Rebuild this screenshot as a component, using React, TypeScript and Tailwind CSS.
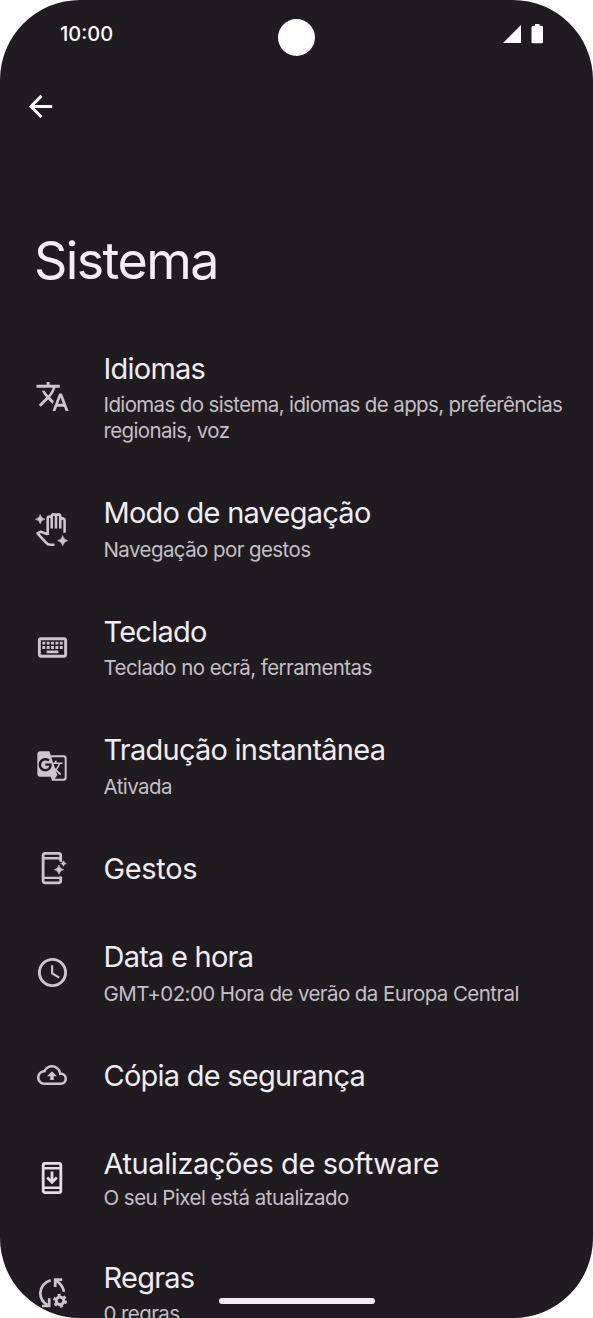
import type { ReactNode } from "react";
import {
  MdArrowBack,
  MdGTranslate,
  MdOutlineBackup,
  MdOutlineKeyboard,
  MdSchedule,
  MdTranslate,
} from "react-icons/md";

function HandIcon() {
  return (
    <svg viewBox="0 0 36 36" className="size-9" fill="none" stroke="currentColor" strokeWidth="2.6">
      <path d="M13.700 24V7.500a2 2 0 0 1 4 0V17.500M17.700 7V5.500a2.150 2.150 0 0 1 4.300 0V17.500M22 5.500a2.150 2.150 0 0 1 4.300 0V17.500M26.300 9.500a2.150 2.150 0 0 1 4.300 0V21.700" />
      <path d="M13.700 23.300L6.800 20.700L3.500 22.400L12 31.600Q13.800 33.700 16.500 33.700H20.500" strokeLinejoin="round" />
      <path d="M6.200 3.500Q6.900 7.400 10.900 8.200Q6.900 9 6.200 12.900Q5.500 9 1.500 8.200Q5.500 7.400 6.200 3.500Z" fill="currentColor" strokeWidth=".6" />
      <path d="M28.700 24.600Q29.500 28.900 33.800 29.700Q29.500 30.500 28.700 34.800Q27.900 30.500 23.600 29.700Q27.900 28.900 28.700 24.600Z" fill="currentColor" strokeWidth=".6" />
    </svg>
  );
}

function GestureIcon() {
  return (
    <svg viewBox="0 0 36 36" className="size-9" fill="none" stroke="currentColor" strokeWidth="2.800">
      <path d="M26.700 11.700V5.200a1.800 1.800 0 0 0-1.800-1.800H10.900a1.800 1.800 0 0 0-1.800 1.800v25.800a1.800 1.800 0 0 0 1.800 1.800h14a1.800 1.800 0 0 0 1.800-1.800V26.500" />
      <path d="M9 8.300H26.700M9 27.900H26.700" strokeWidth="2.400" />
      <path d="M25 15Q25.800 18.900 29.700 19.700Q25.800 20.500 25 24.400Q24.200 20.500 20.300 19.700Q24.200 18.900 25 15Z" fill="currentColor" strokeWidth=".6" />
      <path d="M29.500 10.600Q30 13 32.400 13.500Q30 14 29.500 16.400Q29 14 26.600 13.500Q29 13 29.500 10.600Z" fill="currentColor" strokeWidth=".4" />
    </svg>
  );
}

function UpdateIcon() {
  return (
    <svg viewBox="0 0 36 36" className="size-9 text-[#e3dde5]" fill="none" stroke="currentColor" strokeWidth="2.800">
      <rect x="9.200" y="3.400" width="17.600" height="29.200" rx="1.800" />
      <path d="M9 8.300H27M9 27.700H27" strokeWidth="2.400" />
      <path d="M18 11.500V22M13.200 17.600L18 22.300L22.800 17.600" />
    </svg>
  );
}

function RulesIcon() {
  return (
    <svg viewBox="0 0 36 36" className="size-9" fill="none" stroke="currentColor" strokeWidth="2.700">
      <path d="M16.700 5.300C10.500 7 6.300 12 6.300 18C6.300 23 9 27.500 13.500 30" />
      <path d="M8 31H15.200V23.300M28.200 4.700H21.200V12M21.800 5.300Q28.500 9.500 30 16.700" />
      <circle cx="26" cy="25.700" r="3.800" strokeWidth="3" />
      <circle cx="26" cy="25.700" r="5.700" strokeWidth="2.600" strokeDasharray="2.984 2.984" />
    </svg>
  );
}

type Item = {
  icon: ReactNode;
  title: string;
  lines?: string[];
  rowClass?: string;
  titleClass?: string;
  bodyClass?: string;
};

const items: Item[] = [
  {
    icon: <MdTranslate className="size-[35px]" />,
    title: "Idiomas",
    lines: ["Idiomas do sistema, idiomas de apps, preferências", "regionais, voz"],
    rowClass: "py-[25.25px]",
    bodyClass: "mt-[5px] tracking-[-0.63px]",
  },
  {
    icon: <HandIcon />,
    title: "Modo de navegação",
    lines: ["Navegação por gestos"],
  },
  {
    icon: <MdOutlineKeyboard className="size-[35px]" />,
    title: "Teclado",
    lines: ["Teclado no ecrã, ferramentas"],
  },
  {
    icon: <MdGTranslate className="size-[32px]" />,
    title: "Tradução instantânea",
    lines: ["Ativada"],
  },
  {
    icon: <GestureIcon />,
    title: "Gestos",
    rowClass: "pt-[25.25px] pb-[26.25px]",
    titleClass: "tracking-[-0.35px]",
  },
  {
    icon: <MdSchedule className="size-[35px]" />,
    title: "Data e hora",
    lines: ["GMT+02:00 Hora de verão da Europa Central"],
  },
  {
    icon: <MdOutlineBackup className="size-[30px]" />,
    title: "Cópia de segurança",
    rowClass: "pt-[25.25px] pb-[26px]",
  },
  {
    icon: <UpdateIcon />,
    title: "Atualizações de software",
    lines: ["O seu Pixel está atualizado"],
    rowClass: "pt-[25.25px] pb-[22.5px]",
    titleClass: "tracking-[-0.42px]",
    bodyClass: "mt-[3px] tracking-[-0.54px]",
  },
  {
    icon: <RulesIcon />,
    title: "Regras",
    lines: ["0 regras"],
  },
];

function Row({
  icon,
  title,
  lines,
  rowClass = "pt-[25.25px] pb-[24.75px]",
  titleClass = "tracking-[-0.76px]",
  bodyClass = "mt-[5.5px] tracking-[-0.58px]",
}: Item) {
  return (
    <li className={`flex shrink-0 items-center ${rowClass}`}>
      <div className="-mr-[0.5px] flex w-[104px] shrink-0 justify-center text-[#cbc5cd]">{icon}</div>
      <div className="min-w-0 whitespace-nowrap">
        <h2 className={`text-[29px] leading-[37px] font-normal text-[#f1ebf2] ${titleClass}`}>{title}</h2>
        {lines && (
          <div className={bodyClass}>
            {lines.map((line) => (
              <p key={line} className="text-[20.5px] leading-[26px] font-normal text-[#c5bfc7]">
                {line}
              </p>
            ))}
          </div>
        )}
      </div>
    </li>
  );
}

export default function App() {
  return (
    <div className="h-[1318px] w-[593px] bg-white font-['Inter',sans-serif]">
      <main className="relative flex h-full flex-col overflow-hidden rounded-[80px] bg-[#1f1b20]">
        {/* Status bar */}
        <header className="flex h-[68px] shrink-0 items-center justify-between pr-[49px] pl-[60px] text-white">
          <span className="text-[20px] font-medium">10:00</span>
          <div className="flex items-center gap-[10px]">
            <svg viewBox="0 0 18 18" className="size-[18px]" fill="currentColor">
              <path d="M18 0V18H0Z" />
            </svg>
            <svg viewBox="0 0 13 20" className="h-5 w-[13px]" fill="currentColor">
              <path d="M4 0H8.500V1.800H10.500Q12 1.800 12 3.300V18Q12 19.300 10.700 19.300H1.800Q.5 19.300 .5 18V3.300Q.5 1.800 2 1.800H4Z" />
            </svg>
          </div>
        </header>
        <div className="absolute top-[19px] left-[277.5px] size-[37px] rounded-full bg-white" />

        {/* Toolbar */}
        <div className="flex h-[77px] shrink-0 items-center pl-[23px]">
          <button aria-label="Voltar">
            <MdArrowBack className="size-[35px] text-white" />
          </button>
        </div>

        <h1 className="mt-[86px] ml-[34px] shrink-0 text-[52px] leading-[60px] font-normal tracking-[-1.6px] text-[#f3edf5]">
          Sistema
        </h1>

        <ul className="mt-[33.5px] flex flex-col">
          {items.map((item) => (
            <Row key={item.title} {...item} />
          ))}
        </ul>

        {/* Gesture bar */}
        <div className="absolute bottom-[14px] left-[218.5px] h-[6px] w-[156px] rounded-full bg-[#f1ebf2]" />
      </main>
    </div>
  );
}
